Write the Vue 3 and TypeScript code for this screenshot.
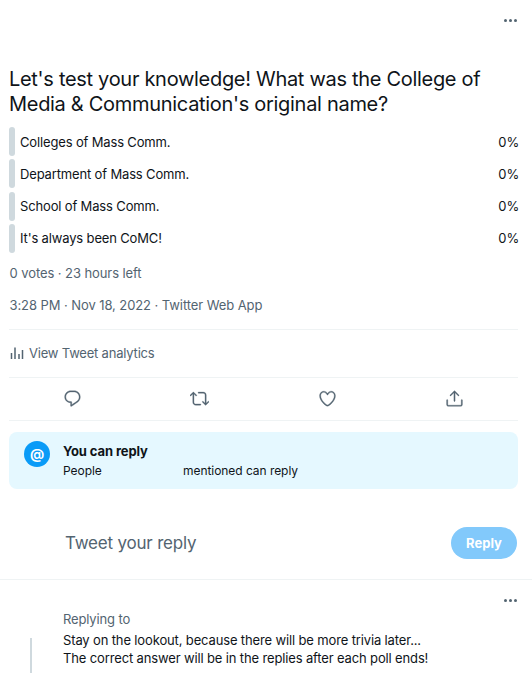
<template>
  <div class="tweet-page">
    <div class="top-more">
      <span class="dots"><i></i><i></i><i></i></span>
    </div>

    <h1 class="question">Let's test your knowledge! What was the College of Media &amp; Communication's original name?</h1>

    <ul class="poll">
      <li v-for="opt in options" :key="opt" class="poll-row">
        <span class="bar"></span>
        <span class="label">{{ opt }}</span>
        <span class="pct">0%</span>
      </li>
    </ul>

    <p class="meta votes">0 votes · 23 hours left</p>
    <p class="meta stamp">3:28 PM · Nov 18, 2022 · Twitter Web App</p>

    <div class="analytics">
      <svg viewBox="0 0 14 14" class="an-icon" aria-hidden="true">
        <path d="M1.500 13V7M5 13V1.500M9 13V8M12.500 13V4" />
      </svg>
      <span>View Tweet analytics</span>
    </div>

    <div class="actions">
      <div class="action">
        <svg viewBox="0 0 24 24" aria-hidden="true">
          <path d="M14.046 2.242l-4.148-.01h-.002c-4.374 0-7.8 3.427-7.8 7.802 0 4.098 3.186 7.206 7.465 7.37v3.828c0 .108.044.286.12.403.142.225.384.347.632.347.138 0 .277-.038.402-.118.264-.168 6.473-4.14 8.088-5.506 1.902-1.61 3.04-3.97 3.043-6.312v-.017c-.006-4.367-3.43-7.787-7.8-7.788zm3.787 12.972c-1.134.96-4.862 3.405-6.772 4.643V16.67c0-.414-.335-.75-.75-.75h-.396c-3.66 0-6.318-2.476-6.318-5.886 0-3.534 2.768-6.302 6.3-6.302l4.147.01h.002c3.532 0 6.3 2.766 6.302 6.296-.003 1.91-.942 3.844-2.514 5.176z" />
        </svg>
      </div>
      <div class="action">
        <svg viewBox="0 0 24 24" aria-hidden="true">
          <path d="M23.770 15.670c-.292-.293-.767-.293-1.060 0l-2.220 2.220V7.650c0-2.068-1.683-3.750-3.750-3.750h-5.850c-.414 0-.750.336-.750.750s.336.750.750.750h5.850c1.240 0 2.250 1.010 2.250 2.250v10.240l-2.220-2.220c-.293-.293-.768-.293-1.060 0s-.294.768 0 1.060l3.500 3.500c.145.147.337.220.530.220s.383-.072.530-.220l3.500-3.500c.294-.292.294-.767 0-1.060zm-10.660 3.280H7.260c-1.240 0-2.250-1.010-2.250-2.250V6.460l2.220 2.220c.148.147.340.220.532.220s.384-.073.530-.220c.293-.293.293-.768 0-1.060l-3.500-3.500c-.293-.294-.768-.294-1.060 0l-3.500 3.500c-.294.292-.294.767 0 1.060s.767.293 1.060 0l2.220-2.220V16.700c0 2.068 1.683 3.750 3.750 3.750h5.850c.414 0 .750-.336.750-.750s-.337-.750-.750-.750z" />
        </svg>
      </div>
      <div class="action">
        <svg viewBox="0 0 24 24" aria-hidden="true">
          <path d="M12 21.638h-.014C9.403 21.590 1.950 14.856 1.950 8.478c0-3.064 2.525-5.754 5.403-5.754 2.290 0 3.830 1.580 4.646 2.730.814-1.148 2.354-2.730 4.645-2.730 2.880 0 5.404 2.690 5.404 5.755 0 6.376-7.454 13.110-10.037 13.157H12zM7.354 4.225c-2.080 0-3.903 1.988-3.903 4.255 0 5.740 7.034 11.596 8.550 11.658 1.518-.062 8.550-5.917 8.550-11.658 0-2.267-1.823-4.255-3.903-4.255-2.528 0-3.940 2.936-3.952 2.965-.230.562-1.156.562-1.387 0-.014-.030-1.425-2.965-3.954-2.965z" />
        </svg>
      </div>
      <div class="action">
        <svg viewBox="0 0 24 24" aria-hidden="true">
          <path d="M17.530 7.470l-5-5c-.293-.293-.768-.293-1.060 0l-5 5c-.294.293-.294.768 0 1.060s.767.294 1.060 0l3.720-3.720V15c0 .414.336.750.750.750s.750-.336.750-.750V4.810l3.720 3.720c.146.147.338.220.530.220s.384-.072.530-.220c.293-.293.293-.767 0-1.060z" />
          <path d="M19.708 21.944H4.292C3.028 21.944 2 20.916 2 19.652V14c0-.414.336-.750.750-.750s.750.336.750.750v5.652c0 .437.355.792.792.792h15.416c.437 0 .792-.355.792-.792V14c0-.414.336-.750.750-.750s.750.336.750.750v5.652c0 1.264-1.028 2.292-2.292 2.292z" />
        </svg>
      </div>
    </div>

    <div class="notice">
      <span class="at">@</span>
      <div class="notice-text">
        <strong>You can reply</strong>
        <span class="notice-sub"><span class="people">People</span>mentioned can reply</span>
      </div>
    </div>

    <div class="composer">
      <span class="placeholder">Tweet your reply</span>
      <button class="reply-btn" type="button">Reply</button>
    </div>

    <div class="next-tweet">
      <div class="top-more small">
        <span class="dots"><i></i><i></i><i></i></span>
      </div>
      <div class="next-body">
        <span class="thread"></span>
        <div class="next-text">
          <p class="replying">Replying to</p>
          <p>Stay on the lookout, because there will be more trivia later...</p>
          <p>The correct answer will be in the replies after each poll ends!</p>
        </div>
      </div>
    </div>
  </div>
</template>

<script setup lang="ts">
const options: string[] = [
  'Colleges of Mass Comm.',
  'Department of Mass Comm.',
  'School of Mass Comm.',
  "It's always been CoMC!",
]
</script>

<style>
html,
body {
  background: #fff;
  overflow: hidden;
}
</style>

<style scoped>
.tweet-page {
  width: 532px;
  height: 673px;
  overflow: hidden;
  font-family: Inter, "Liberation Sans", sans-serif;
  color: #0f1419;
  box-sizing: border-box;
}

p,
h1,
ul {
  margin: 0;
  padding: 0;
}

.top-more {
  display: flex;
  justify-content: flex-end;
  padding: 19px 15px 0 0;
  height: 47px;
  box-sizing: border-box;
}

.dots {
  display: flex;
  gap: 2px;
  height: 3px;
}

.dots i {
  width: 3px;
  height: 3px;
  border-radius: 50%;
  background: #536471;
}

.question {
  margin: 20px 14px 0 9px;
  font-size: 20px;
  line-height: 25px;
  font-weight: 400;
  letter-spacing: -0.3px;
}

.poll {
  list-style: none;
  margin: 10px 13px 0 9px;
  display: flex;
  flex-direction: column;
  gap: 3.300px;
}

.poll-row {
  display: flex;
  align-items: center;
  height: 29px;
  font-size: 13px;
  letter-spacing: -0.15px;
}

.bar {
  width: 6px;
  height: 100%;
  border-radius: 3px;
  background: #cfd9de;
  margin-right: 5px;
}

.label {
  flex: 1;
}

.meta {
  font-size: 13px;
  line-height: 16px;
  color: #536471;
  letter-spacing: -0.08px;
}

.votes {
  margin: 12px 0 0 9.500px;
}

.stamp {
  margin: 16px 0 0 9.500px;
}

.analytics {
  margin: 16px 14px 0 9px;
  padding: 15px 0 16px;
  border-top: 1px solid #eff3f4;
  border-bottom: 1px solid #eff3f4;
  display: flex;
  align-items: center;
  gap: 5px;
  height: 16px;
  font-size: 13px;
  letter-spacing: -0.2px;
  color: #536471;
  box-sizing: content-box;
}

.an-icon {
  width: 14px;
  height: 14px;
  margin-left: 1px;
  fill: none;
  stroke: #536471;
  stroke-width: 1.500;
}

.actions {
  margin: 0 14px 0 9px;
  height: 42px;
  border-bottom: 1px solid #eff3f4;
  display: grid;
  grid-template-columns: repeat(4, 1fr);
  justify-items: center;
  align-items: center;
}

.action svg {
  display: block;
  width: 19px;
  height: 19px;
  fill: #536471;
  stroke: #536471;
  stroke-width: 0.4;
}

.notice {
  margin: 11px 14px 0 9px;
  height: 57px;
  border-radius: 8px;
  background: #e5f8ff;
  display: flex;
  align-items: center;
  padding-left: 15px;
  gap: 13px;
}

.at {
  align-self: flex-start;
  margin-top: 9px;
  width: 26px;
  height: 26px;
  border-radius: 50%;
  background: #0a9bf7;
  color: #fff;
  font-size: 14px;
  font-weight: 700;
  display: flex;
  align-items: center;
  justify-content: center;
}

.notice-text {
  display: flex;
  flex-direction: column;
  gap: 4px;
}

.notice-text strong {
  font-size: 13px;
  line-height: 16px;
  font-weight: 700;
  letter-spacing: -0.1px;
}

.notice-sub {
  font-size: 12px;
  line-height: 15px;
  color: #0f1419;
  letter-spacing: -0.05px;
}

.people {
  display: inline-block;
  width: 120px;
}

.composer {
  margin: 38px 15px 0 65px;
  display: flex;
  align-items: center;
  justify-content: space-between;
}

.placeholder {
  font-size: 17px;
  letter-spacing: -0.2px;
  color: #536471;
}

.reply-btn {
  width: 66px;
  height: 32px;
  border: 0;
  border-radius: 16px;
  background: #82c9fb;
  color: #fff;
  font-family: inherit;
  font-size: 13px;
  font-weight: 700;
  padding: 0;
}

.next-tweet {
  margin-top: 20px;
  border-top: 1px solid #eff3f4;
}

.top-more.small {
  padding-top: 19px;
  height: 30px;
}

.next-body {
  display: flex;
  padding-left: 30px;
}

.thread {
  width: 2px;
  height: 60px;
  margin-top: 28px;
  background: #cfd9de;
}

.next-text {
  margin-left: 31px;
  font-size: 13px;
  line-height: 18px;
  letter-spacing: -0.14px;
}

.replying {
  color: #536471;
  margin-bottom: 3px;
}
</style>
